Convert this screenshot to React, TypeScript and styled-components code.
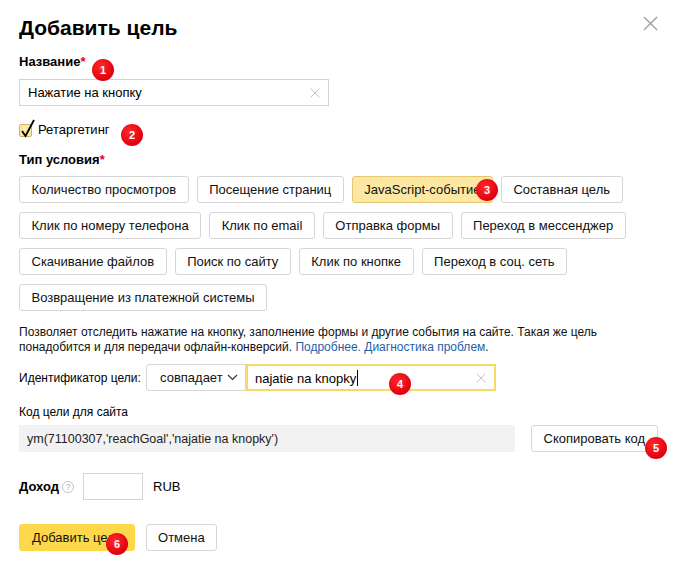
import React from 'react';
import styled, { createGlobalStyle } from 'styled-components';

const GlobalStyle = createGlobalStyle`
  body {
    margin: 0;
    background: #fff;
    color: #000;
    font-family: "Liberation Sans", Arial, sans-serif;
  }
`;

const Page = styled.div`
  position: relative;
  box-sizing: border-box;
  width: 675px;
  height: 567px;
  padding: 0 17px 0 19px;
  display: flex;
  flex-direction: column;
`;

const Header = styled.div`
  display: flex;
  justify-content: space-between;
  align-items: flex-start;
  margin-top: 15px;
`;

const Title = styled.h1`
  margin: 0;
  font-size: 21px;
  line-height: 26px;
  font-weight: 700;
`;

const CloseButton = styled.button`
  margin-top: 1px;
  padding: 0;
  border: none;
  background: none;
  width: 15px;
  height: 15px;
  cursor: pointer;
  svg { display: block; }
`;

const Label = styled.div<{ $mt: number }>`
  margin-top: ${p => p.$mt}px;
  font-size: 13px;
  line-height: 16px;
  font-weight: 700;

  span { color: #e0001b; }
`;

const TextInput = styled.div<{ $width: number; $focused?: boolean }>`
  box-sizing: border-box;
  width: ${p => p.$width}px;
  height: 27px;
  display: flex;
  align-items: center;
  justify-content: space-between;
  padding: 0 8px 0 ${p => (p.$focused ? 7 : 8)}px;
  border: ${p => (p.$focused ? '2px solid #f8d866' : '1px solid #d4d4d4')};
  background: #fff;
  font-size: 13px;
`;

const Caret = styled.span`
  display: inline-block;
  width: 1px;
  height: 16px;
  margin-left: 1px;
  background: #000;
  vertical-align: -3px;
`;

const NameInput = styled(TextInput)`
  margin-top: 9px;
`;

const CheckRow = styled.label`
  display: flex;
  align-items: center;
  gap: 6px;
  margin-top: 14px;
  height: 18px;
  font-size: 13px;
`;

const CheckBox = styled.span`
  position: relative;
  box-sizing: border-box;
  width: 13px;
  height: 13px;
  margin-top: 3px;
  border: 1px solid #cdb36d;
  border-radius: 2px;
  background: #fce9a6;

  svg {
    position: absolute;
    left: 0;
    top: -6px;
  }
`;

const Chips = styled.div`
  display: flex;
  flex-direction: column;
  gap: 9px;
  margin-top: 8px;
`;

const ChipRow = styled.div`
  display: flex;
  gap: 8px;
`;

const Chip = styled.button<{ $active?: boolean }>`
  box-sizing: border-box;
  height: 27px;
  padding: 0 11.5px;
  border: 1px solid ${p => (p.$active ? '#e4c673' : '#d6d6d6')};
  border-radius: 3px;
  background: ${p => (p.$active ? '#fde8a3' : '#fff')};
  color: #111;
  font-family: inherit;
  font-size: 13px;
  white-space: nowrap;
  cursor: pointer;
`;

const Hint = styled.p`
  margin: 14px 0 0;
  font-size: 12px;
  line-height: 15px;
  color: #111;

  a { color: #1f5fa8; text-decoration: none; }
`;

const IdRow = styled.div`
  display: flex;
  align-items: center;
  margin-top: 9px;
  font-size: 13px;
`;

const IdLabel = styled.span`
  width: 127px;
  font-size: 12px;
  white-space: nowrap;
`;

const Select = styled.button`
  box-sizing: border-box;
  display: flex;
  align-items: center;
  gap: 4px;
  height: 27px;
  width: 100px;
  padding: 0 0 0 13px;
  border: 1px solid #d6d6d6;
  border-radius: 3px 0 0 3px;
  background: #fff;
  font-family: inherit;
  font-size: 13px;
  color: #111;
`;

const SubLabel = styled.div`
  margin-top: 14px;
  font-size: 12px;
  line-height: 15px;
`;

const CodeRow = styled.div`
  display: flex;
  align-items: center;
  gap: 16px;
  margin-top: 5px;
`;

const CodeBox = styled.div`
  box-sizing: border-box;
  width: 496px;
  height: 27px;
  display: flex;
  align-items: center;
  padding-left: 8px;
  background: #f2f2f2;
  font-size: 12.5px;
  color: #222;
`;

const IncomeRow = styled.div`
  display: flex;
  align-items: center;
  margin-top: 21px;
  font-size: 13px;
`;

const IncomeLabel = styled.span`
  display: flex;
  align-items: center;
  gap: 3px;
  width: 64px;
  font-weight: 700;
`;

const HelpIcon = styled.span`
  box-sizing: border-box;
  width: 12px;
  height: 12px;
  border: 1px solid #c4c4c4;
  border-radius: 50%;
  color: #b0b0b0;
  font-size: 9px;
  font-weight: 400;
  line-height: 10px;
  text-align: center;
`;

const SmallInput = styled.div`
  box-sizing: border-box;
  width: 60px;
  height: 27px;
  border: 1px solid #d4d4d4;
  margin-right: 10px;
`;

const Actions = styled.div`
  display: flex;
  gap: 11px;
  margin-top: 24px;
`;

const PrimaryButton = styled(Chip)`
  border-color: #fcd84a;
  background: #fdd84b;
  padding: 0 12px;
`;

const Badge = styled.span<{ $x: number; $y: number }>`
  position: absolute;
  left: ${p => p.$x - 11}px;
  top: ${p => p.$y - 11}px;
  width: 22px;
  height: 22px;
  border-radius: 50%;
  background: radial-gradient(circle at 40% 35%, #ff2a2a, #e00010 70%);
  color: #fff;
  font-size: 11px;
  font-weight: 700;
  line-height: 22px;
  text-align: center;
`;

const Cross = ({ size, color, width }: { size: number; color: string; width: number }) => (
  <svg width={size} height={size} viewBox="0 0 16 16">
    <path d="M1 1L15 15M15 1L1 15" stroke={color} strokeWidth={width} fill="none" />
  </svg>
);

const rows: { label: string; active?: boolean }[][] = [
  [{ label: 'Количество просмотров' }, { label: 'Посещение страниц' }, { label: 'JavaScript-событие', active: true }, { label: 'Составная цель' }],
  [{ label: 'Клик по номеру телефона' }, { label: 'Клик по email' }, { label: 'Отправка формы' }, { label: 'Переход в мессенджер' }],
  [{ label: 'Скачивание файлов' }, { label: 'Поиск по сайту' }, { label: 'Клик по кнопке' }, { label: 'Переход в соц. сеть' }],
  [{ label: 'Возвращение из платежной системы' }],
];

const badges = [
  { n: 1, x: 103, y: 70 },
  { n: 2, x: 132, y: 135 },
  { n: 3, x: 487, y: 190 },
  { n: 4, x: 400, y: 384 },
  { n: 5, x: 656, y: 448 },
  { n: 6, x: 117, y: 544 },
];

export default function App() {
  return (
    <>
      <GlobalStyle />
      <Page>
        <Header>
          <Title>Добавить цель</Title>
          <CloseButton aria-label="Закрыть">
            <Cross size={15} color="#a3a3a3" width={1.6} />
          </CloseButton>
        </Header>

        <Label $mt={13}>Название<span>*</span></Label>
        <NameInput $width={310}>
          <span>Нажатие на кнопку</span>
          <Cross size={10} color="#b5b5b5" width={1.3} />
        </NameInput>

        <CheckRow>
          <CheckBox>
            <svg width="16" height="20" viewBox="0 0 16 20">
              <path d="M2 12L5.5 17L14 1" stroke="#000" strokeWidth="1.8" fill="none" />
            </svg>
          </CheckBox>
          Ретаргетинг
        </CheckRow>

        <Label $mt={14}>Тип условия<span>*</span></Label>
        <Chips>
          {rows.map((row, i) => (
            <ChipRow key={i}>
              {row.map(c => (
                <Chip key={c.label} $active={c.active}>{c.label}</Chip>
              ))}
            </ChipRow>
          ))}
        </Chips>

        <Hint>
          Позволяет отследить нажатие на кнопку, заполнение формы и другие события на сайте. Такая же цель
          понадобится и для передачи офлайн-конверсий. <a href="#">Подробнее. Диагностика проблем</a>.
        </Hint>

        <IdRow>
          <IdLabel>Идентификатор цели:</IdLabel>
          <Select>
            совпадает
            <svg width="11" height="7" viewBox="0 0 11 7">
              <path d="M1 1L5.5 5.5L10 1" stroke="#333" strokeWidth="1.2" fill="none" />
            </svg>
          </Select>
          <TextInput $width={250} $focused>
            <span>najatie na knopky<Caret /></span>
            <Cross size={10} color="#b5b5b5" width={1.3} />
          </TextInput>
        </IdRow>

        <SubLabel>Код цели для сайта</SubLabel>
        <CodeRow>
          <CodeBox>ym(71100307,'reachGoal','najatie na knopky')</CodeBox>
          <Chip>Скопировать код</Chip>
        </CodeRow>

        <IncomeRow>
          <IncomeLabel>Доход<HelpIcon>?</HelpIcon></IncomeLabel>
          <SmallInput />
          RUB
        </IncomeRow>

        <Actions>
          <PrimaryButton>Добавить цель</PrimaryButton>
          <Chip>Отмена</Chip>
        </Actions>

        {badges.map(b => (
          <Badge key={b.n} $x={b.x} $y={b.y}>{b.n}</Badge>
        ))}
      </Page>
    </>
  );
}
